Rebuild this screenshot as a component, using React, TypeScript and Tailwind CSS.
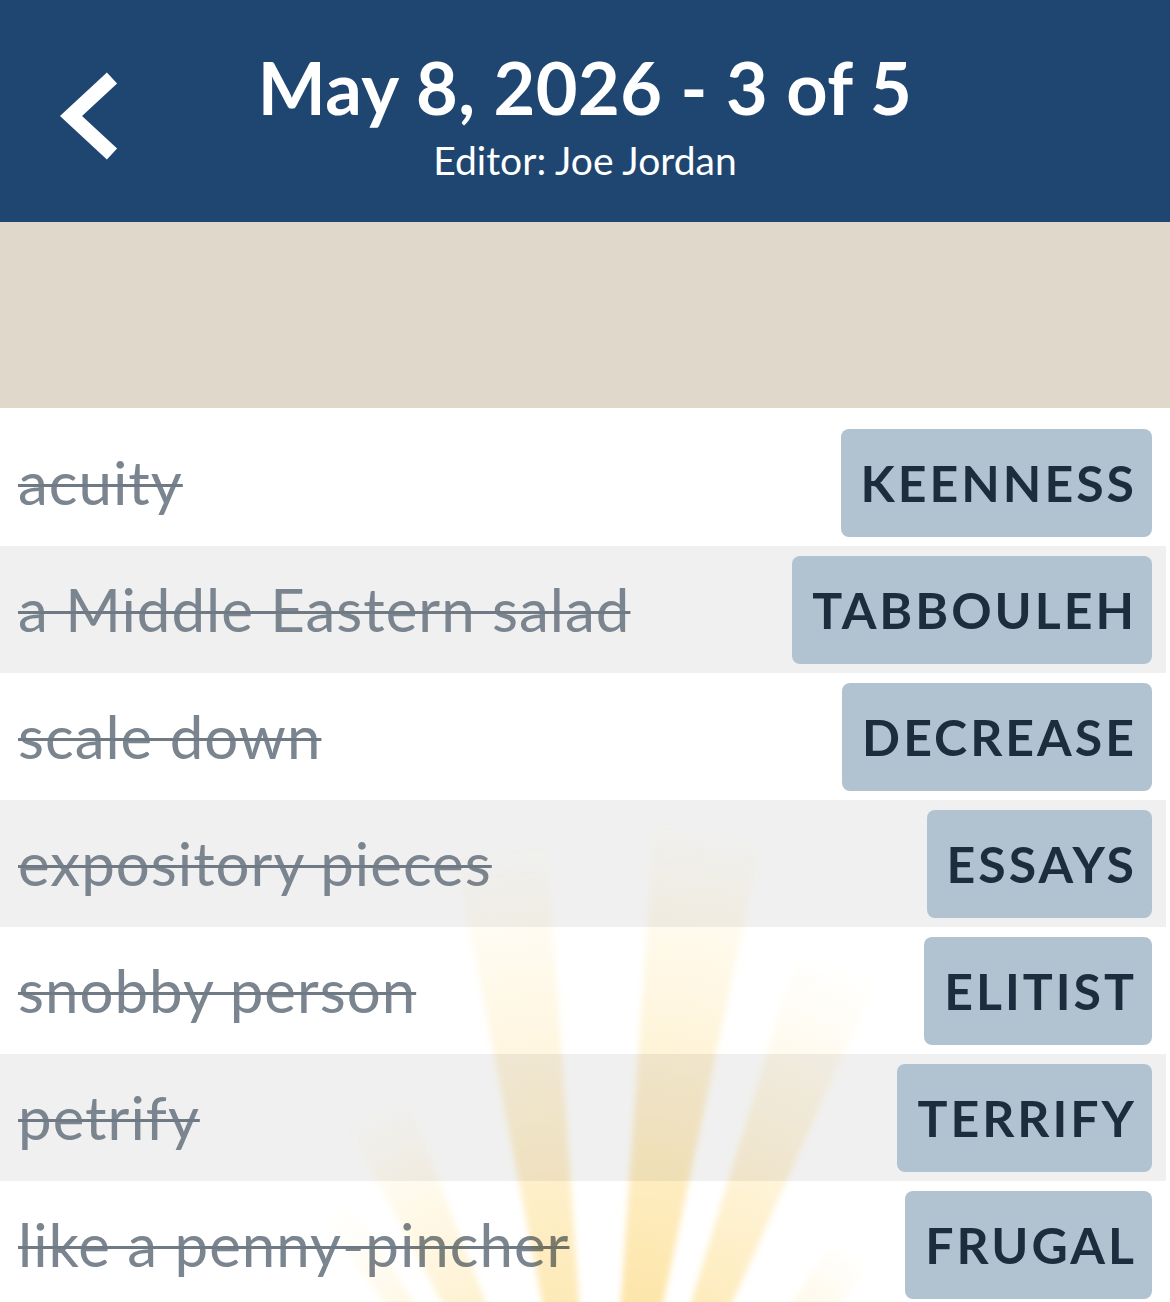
import React from "react";

type Clue = { clue: string; answer: string };

const CLUES: Clue[] = [
  { clue: "acuity", answer: "KEENNESS" },
  { clue: "a Middle Eastern salad", answer: "TABBOULEH" },
  { clue: "scale down", answer: "DECREASE" },
  { clue: "expository pieces", answer: "ESSAYS" },
  { clue: "snobby person", answer: "ELITIST" },
  { clue: "petrify", answer: "TERRIFY" },
  { clue: "like a penny-pincher", answer: "FRUGAL" },
];

const FONT = { fontFamily: "Lato, 'Noto Sans', sans-serif" };

// rays fanning out from below the list: [from deg, to deg, strength, reach]
const RAYS: [number, number, number, number][] = [
  [-36, -32, 0.45, 470],
  [-28, -21, 0.6, 540],
  [-11, -4, 0.85, 760],
  [4, 12, 1, 780],
  [17, 24, 0.8, 680],
  [33, 39, 0.5, 430],
];

const LIST_H = 894;
const CX = 600;
const CY = 1192;

function SunRays() {
  return (
    <svg
      className="pointer-events-none absolute inset-0 h-full w-full mix-blend-multiply"
      viewBox={`0 0 1170 ${LIST_H}`}
      preserveAspectRatio="none"
    >
      <defs>
        <filter id="soft" x="-20%" y="-20%" width="140%" height="140%">
          <feGaussianBlur stdDeviation="3" />
        </filter>
        {RAYS.map(([, , , reach], i) => (
          <radialGradient key={i} id={`ray${i}`} gradientUnits="userSpaceOnUse" cx={CX} cy={CY} r={reach}>
            <stop offset={290 / reach} stopColor="#fcd46e" stopOpacity="0.6" />
            <stop offset={(290 + (reach - 290) * 0.45) / reach} stopColor="#fcd46e" stopOpacity="0.32" />
            <stop offset="1" stopColor="#fcd46e" stopOpacity="0" />
          </radialGradient>
        ))}
      </defs>
      <g filter="url(#soft)">
        {RAYS.map(([a, b, s, reach], i) => {
          const ra = (a * Math.PI) / 180;
          const rb = (b * Math.PI) / 180;
          const pts = [
            [CX, CY],
            [CX + reach * Math.sin(ra), CY - reach * Math.cos(ra)],
            [CX + reach * Math.sin(rb), CY - reach * Math.cos(rb)],
          ]
            .map((p) => p.join(","))
            .join(" ");
          return <polygon key={i} points={pts} fill={`url(#ray${i})`} opacity={s} />;
        })}
      </g>
    </svg>
  );
}

function Header() {
  return (
    <div className="relative flex h-[222px] flex-col items-center bg-[#1f4671] pt-[46px] text-white">
      <svg
        className="absolute left-[52px] top-[68px]"
        width="76"
        height="100"
        viewBox="0 0 76 100"
      >
        <polyline
          points="60,10 19,48 60,86"
          fill="none"
          stroke="white"
          strokeWidth="15"
          strokeLinejoin="miter"
        />
      </svg>
      <h1 className="text-[72px] font-bold leading-[82px] tracking-[0.5px]">May 8, 2026 - 3 of 5</h1>
      <p className="mt-[10px] text-[39px] leading-[44px]">Editor: Joe Jordan</p>
    </div>
  );
}

function ClueRow({ clue, answer, shade }: Clue & { shade: boolean }) {
  return (
    <div
      className={`flex h-[127px] items-start justify-between pl-[18px] ${
        shade ? "mr-[4px] bg-[#f0f0f0] pr-[14px]" : "bg-white pr-[18px]"
      }`}
    >
      <span className="mt-[30px] text-[60px] leading-[66px] tracking-[1px] text-[#7b8590] line-through decoration-[3px] decoration-[#6f7a85]">
        {clue}
      </span>
      <div className="relative z-10 mt-[10px] flex h-[108px] items-center rounded-[8px] bg-[#b1c3d0] pl-[20px] pr-[15px]">
        <span className="text-[50px] font-bold leading-none tracking-[3px] text-[#1d2d3e]">{answer}</span>
      </div>
    </div>
  );
}

export default function App() {
  return (
    <div className="min-h-[1302px] w-[1170px] overflow-hidden bg-white" style={FONT}>
      <Header />
      <div className="h-[186px] bg-[#dfd8cb]" />
      <div className="relative isolate h-[894px] overflow-hidden bg-white pt-[11px]">
        {CLUES.map((c, i) => (
          <ClueRow key={c.answer} {...c} shade={i % 2 === 1} />
        ))}
        <SunRays />
      </div>
    </div>
  );
}
